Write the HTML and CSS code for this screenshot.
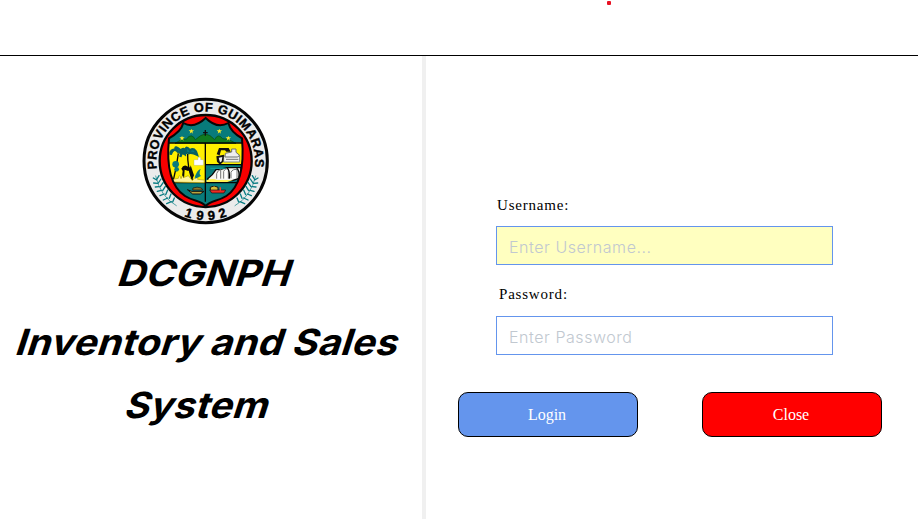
FILE: index.html
```html
<!DOCTYPE html>
<html lang="en">
<head>
<meta charset="utf-8">
<title>DCGNPH Inventory and Sales System</title>
<link rel="stylesheet" href="styles.css">
</head>
<body>
<header class="topbar"><span class="dot"></span></header>
<main class="main">
<section class="brand">
<svg class="seal" viewBox="0 0 420 420" role="img" aria-label="Province of Guimaras seal">
<defs>
<path id="arcTop" d="M66 237A148 148 0 1 1 358 237"/>
<path id="arcBottom" d="M112 360A178 178 0 0 0 312 360"/>
<clipPath id="shield"><path d="M212 84C191 104 168 112 145 99C140 119 125 132 102 145C95 215 103 287 150 318C178 336 197 330 212 348C228 330 246 336 274 318C321 287 327 215 321 145C298 132 285 119 280 99C257 112 232 104 212 84Z"/></clipPath>
</defs>
<circle cx="212" cy="213" r="185" fill="#ebebeb" stroke="#050505" stroke-width="9"/>
<circle cx="212" cy="213" r="138" fill="#f90000" stroke="#050505" stroke-width="7"/>
<g clip-path="url(#shield)">
<path fill="#087b7b" d="M90 70h250v300H90z"/>
<path fill="#fff000" d="M96 158h230v66H212v54H96z"/>
<path d="M120 160Q140 145 154 147Q170 127 181 149Q198 133 211 132Q225 133 239 149Q249 128 263 146Q281 145 303 160Z" fill="#107b20" stroke="#064b19" stroke-width="2"/>
<path d="M98 159H326" stroke="#050505" stroke-width="4"/>
<path d="M211 159V335M211 224H326M100 278H322" stroke="#050505" stroke-width="4"/>
<g fill="#ffed27"><path id="star" d="M169 116l2 5 6 0-5 4 2 6-5-4-5 4 2-6-5-4 6 0z"/><use href="#star" x="-28" y="21"/><use href="#star" x="84"/><use href="#star" x="111" y="21"/></g>
<path d="M211 120v17M204 128h14" stroke="#111" stroke-width="4"/>
<!-- palms and shoreline -->
<path d="M130 190Q125 232 114 275M158 192Q157 230 172 270" stroke="#080808" stroke-width="4" fill="none"/>
<path d="M131 188Q116 168 107 194Q105 178 122 178Q118 165 137 181Q151 168 150 193Q138 184 131 188M158 190Q139 180 136 201Q143 177 153 181Q151 165 165 181Q179 170 186 194Q170 185 158 190" fill="#067c80" stroke="#075f62" stroke-width="7"/>
<circle cx="122" cy="223" r="10" fill="#087b7b"/><circle cx="125" cy="238" r="7" fill="#087b7b"/>
<path d="M139 236Q144 225 153 227L168 234 160 243 149 239 147 267H140L143 243ZM167 226l10 30-6 14-8-27Z" fill="#090909"/>
<path d="M105 276Q116 264 130 265Q133 248 138 266Q143 250 145 263L160 257 172 272 189 252 188 268 208 270V278Z" fill="#fff39b" stroke="#b6a600" stroke-width="2"/>
<path d="M177 209h12v-7h8v7h8v17h-28Z" fill="#fff" stroke="#a4a481"/>
<path d="M180 259Q187 240 197 237Q190 252 198 258L181 266Z" fill="#087b7b"/>
<!-- church and loader -->
<path d="M266 198H314V216H266Z" fill="#f2f2ed" stroke="#828a88" stroke-width="3"/>
<path d="M271 190L290 186V177H303V187L314 196 307 201H270Z" fill="#eee" stroke="#6b706d" stroke-width="3"/>
<path d="M245 193L252 174 281 174 287 185H274L270 181H258L254 196Z" fill="#111"/>
<path d="M244 199L267 194 265 215 255 224 246 215Z" fill="#111"/><path d="M251 203l11-2-2 13-5 3Z" fill="#eee"/>
<path d="M273 208H310" stroke="#777" stroke-width="3"/>
<!-- coast -->
<path d="M218 266L232 254 243 239 260 237 276 233H318V263L292 272H220Z" fill="#f6f6f2" stroke="#080808" stroke-width="4"/>
<path d="M245 266V251Q249 239 257 239V266M266 266V244Q270 234 280 236V266M288 265V247Q293 236 306 239V264" fill="#fff" stroke="#777" stroke-width="3"/>
<path d="M276 234Q285 239 283 266M305 235Q314 242 312 263" stroke="#080808" stroke-width="4" fill="none"/>
<path d="M226 235H272" stroke="#13a0a0" stroke-width="3"/>
<path d="M214 271Q233 263 246 270H294L277 276H215Z" fill="#fff153"/>
<!-- boats -->
<path d="M157 299L170 304H207L196 312H173Z" fill="#b7a53e" stroke="#111" stroke-width="3"/><path d="M174 294Q186 289 199 294L203 300H173Z" fill="#8a762c" stroke="#111" stroke-width="2"/>
<path d="M226 301V292Q237 283 249 292V302" fill="#d7bc36" stroke="#111" stroke-width="3"/><path d="M224 300H272L267 309H230Z" fill="#ec2b23" stroke="#111" stroke-width="2"/><path d="M256 292v10" stroke="#f42" stroke-width="4"/>
<path d="M135 286H205M218 286H285" stroke="#087c7c" stroke-width="3"/>
</g>
<path d="M212 84C191 104 168 112 145 99C140 119 125 132 102 145C95 215 103 287 150 318C178 336 197 330 212 348C228 330 246 336 274 318C321 287 327 215 321 145C298 132 285 119 280 99C257 112 232 104 212 84Z" fill="none" stroke="#070707" stroke-width="6"/>
<g id="laurel" fill="none" stroke="#087b82" stroke-linecap="round">
<path d="M62 258Q76 320 124 347" stroke-width="2"/>
<path d="M65 270L55 264M68 280L56 279M72 290L61 291M79 301L67 304M87 312L75 317M98 324L85 330M109 335L95 341M66 267L72 257M70 279L78 267M76 290L85 277M83 302L91 289M92 314L98 300M103 325L108 312M113 336L118 324" stroke-width="4"/>
</g>
<use href="#laurel" transform="translate(424 0) scale(-1 1)"/>
<g class="seal-text"><text font-size="38"><textPath href="#arcTop" textLength="508" lengthAdjust="spacing">PROVINCE OF GUIMARAS</textPath></text><text font-size="39"><textPath href="#arcBottom" startOffset="40" textLength="132">1992</textPath></text></g>
</svg>
<h1 class="title"><span class="line first">DCGNPH</span><span class="line second">Inventory and Sales</span><span class="line third">System</span></h1>
</section>
<section class="login">
<form class="form">
<label class="label user-label" for="username">Username:</label>
<input class="field user-field" id="username" type="text" placeholder="Enter Username...">
<label class="label pass-label" for="password">Password:</label>
<input class="field" id="password" type="password" placeholder="Enter Password">
<div class="actions"><button class="button submit" type="button">Login</button><button class="button close" type="button">Close</button></div>
</form>
</section>
</main>
</body>
</html>
```
FILE: styles.css
```css
* { box-sizing: border-box; }
body { margin: 0; width: 918px; height: 519px; overflow: hidden; background: #fff; color: #000; }
.topbar { height: 56px; border-bottom: 1px solid #000; display: flex; padding: 1px 0 0 607px; }
.dot { width: 4px; height: 4px; border-radius: 1px; background: #e81123; }
.main { display: grid; grid-template-columns: 426px 1fr; height: 463px; }
.brand { border-right: 4px solid #f0f0f0; padding-top: 34px; }
.seal { display: block; width: 140px; height: 140px; margin-left: 135px; }
.seal-text { font-family: "Liberation Sans", Arial, sans-serif; font-weight: 700; stroke: #000; stroke-width: 1.2px; }
.title { margin: 19px 0 0; font: 700 36px/48px Inter, sans-serif; display: flex; flex-direction: column; align-items: flex-start; }
.line { display: block; white-space: nowrap; transform-origin: left center; }
.first { margin-left: 120px; letter-spacing: .2px; transform: skewX(-18deg) scaleX(1.09); }
.second { margin: 21px 0 0 18px; letter-spacing: .2px; transform: skewX(-18deg) scaleX(1.088); }
.third { margin: 15px 0 0 127px; letter-spacing: .2px; transform: skewX(-18deg) scaleX(1.075); }
.form { padding: 140px 0 0 70px; display: flex; flex-direction: column; align-items: flex-start; }
.label { font: 15px/18px "Liberation Serif", "Times New Roman", serif; letter-spacing: .8px; }
.user-label { margin-left: 1px; }
.pass-label { margin: 20px 0 0 3px; }
.field { width: 337px; height: 39px; margin-top: 12px; padding: 2px 12px 0; border: 1px solid #6495ed; background: #fff; font: 300 16px/20px Inter, sans-serif; letter-spacing: .55px; outline: none; border-radius: 0; }
.pass-label + .field { margin-top: 13px; }
.user-field { background: #ffffc0; }
.field::placeholder { color: #c1c8d0; opacity: 1; }
.actions { display: flex; gap: 64px; margin: 37px 0 0 -38px; }
.button { width: 180px; height: 45px; border: 1px solid #000; border-radius: 10px; color: #fff; padding: 0 2px 0 0; font: 16px/20px "Liberation Serif", "Times New Roman", serif; }
.submit { background: #6495ed; }
.close { background: #f00; }
```
